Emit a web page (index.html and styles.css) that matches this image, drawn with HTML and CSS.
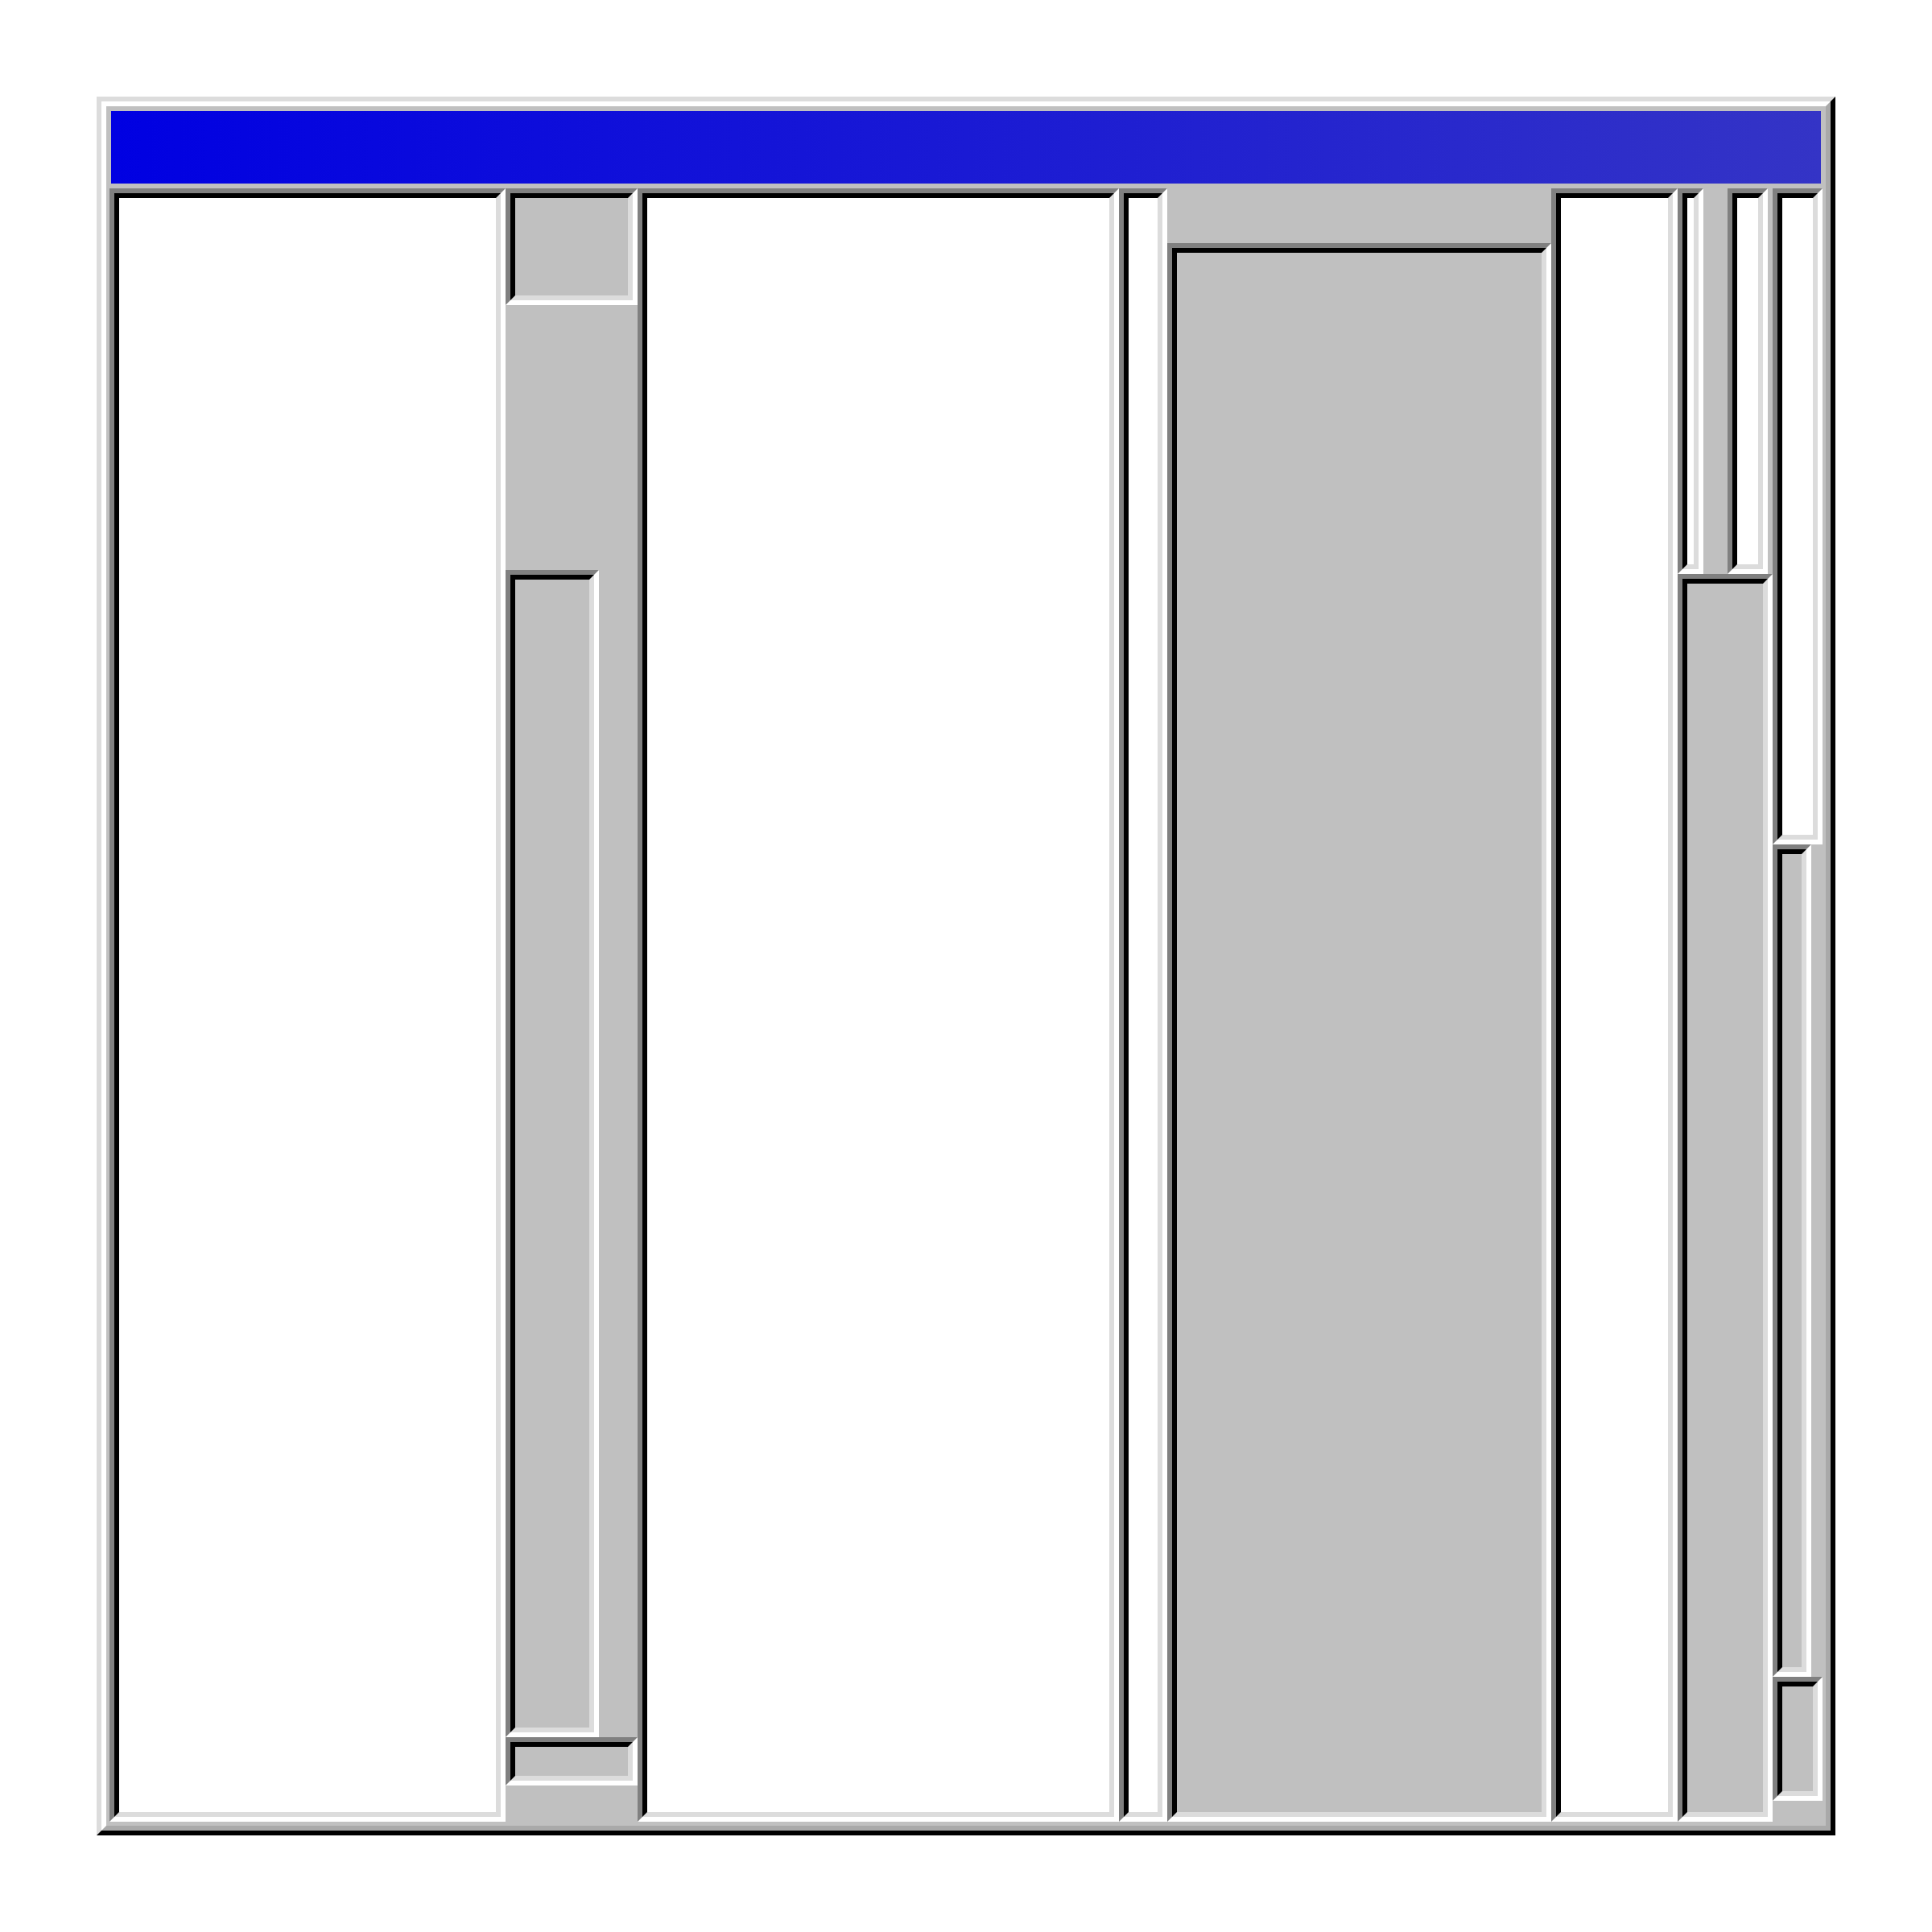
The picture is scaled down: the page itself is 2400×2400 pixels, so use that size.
FILE: index.html
```html
<!DOCTYPE html>
<html>
<head>
<meta charset="utf-8">
<title>Window</title>
<link rel="stylesheet" href="styles.css">
</head>
<body>
<div class="win">
  <div class="win-in">
    <div class="titlebar"></div>
    <div class="panes">
      <div class="col col-a field"><div class="field-in white"></div></div>

      <div class="col col-b stack">
        <div class="field b-top"><div class="field-in silver"></div></div>
        <div class="b-gap"></div>
        <div class="field b-mid"><div class="field-in silver"></div></div>
        <div class="field b-bot"><div class="field-in silver"></div></div>
      </div>

      <div class="col col-c field"><div class="field-in white"></div></div>
      <div class="col col-d field"><div class="field-in white"></div></div>

      <div class="col col-e stack">
        <div class="field e-box"><div class="field-in silver"></div></div>
      </div>

      <div class="col col-f field"><div class="field-in white"></div></div>

      <div class="col col-g stack">
        <div class="g-row">
          <div class="field g-small1"><div class="field-in white"></div></div>
          <div class="field g-small2"><div class="field-in white"></div></div>
        </div>
        <div class="field g-low"><div class="field-in silver"></div></div>
      </div>

      <div class="col col-h stack">
        <div class="field h-top"><div class="field-in white"></div></div>
        <div class="field h-mid"><div class="field-in silver"></div></div>
        <div class="field h-bot"><div class="field-in silver"></div></div>
      </div>
    </div>
  </div>
</div>
</body>
</html>
```
FILE: styles.css
```css
html, body {
  margin: 0;
  padding: 0;
  background: #ffffff;
}

body {
  padding: 120px;
}

.win {
  width: 2160px;
  height: 2160px;
  box-sizing: border-box;
  border: 6px solid;
  border-color: gainsboro black black gainsboro;
  display: flex;
}

.win-in {
  flex: 1;
  border: 6px solid;
  border-color: white darkgray darkgray white;
  background: silver;
  padding: 4px 4px 5px 4px;
  display: flex;
  flex-direction: column;
  min-width: 0;
}

.titlebar {
  height: 90px;
  margin: 2px 2px 6px 2px;
  background: linear-gradient(to right, #0000e2, #3434c6);
  flex: none;
}

.panes {
  flex: 1;
  display: flex;
  flex-direction: row;
  min-height: 0;
}

.col {
  flex: none;
  box-sizing: border-box;
}

/* sunken field: outer gray/white, inner black/gainsboro */
.field {
  box-sizing: border-box;
  border: 6px solid;
  border-color: gray white white gray;
  display: flex;
  flex: none;
}

.field-in {
  flex: 1;
  border: 6px solid;
  border-color: black gainsboro gainsboro black;
}

.white { background: #ffffff; }
.silver { background: silver; }

.stack {
  display: flex;
  flex-direction: column;
  align-items: flex-start;
}

/* column widths */
.col-a { width: 492px; }
.col-b { width: 164px; }
.col-c { width: 598px; }
.col-d { width: 60px; }
.col-e { width: 477px; padding-top: 68px; }
.col-f { width: 157px; }
.col-g { width: 118px; }
.col-h { width: 62px; }

/* column B */
.b-top { width: 164px; height: 145px; }
.b-gap { height: 329px; flex: none; }
.b-mid { width: 116px; height: 1450px; }
.b-bot { width: 164px; height: 60px; }

/* column E */
.e-box { width: 477px; flex: 1; }

/* column G */
.g-row {
  display: flex;
  gap: 30px;
  height: 479px;
  flex: none;
}
.g-small1 { width: 32px; }
.g-small2 { width: 50px; }
.g-low { width: 118px; flex: 1; }

/* column H */
.h-top { width: 62px; height: 815px; }
.h-mid { width: 48px; height: 1034px; }
.h-bot { width: 62px; height: 154px; }
```
